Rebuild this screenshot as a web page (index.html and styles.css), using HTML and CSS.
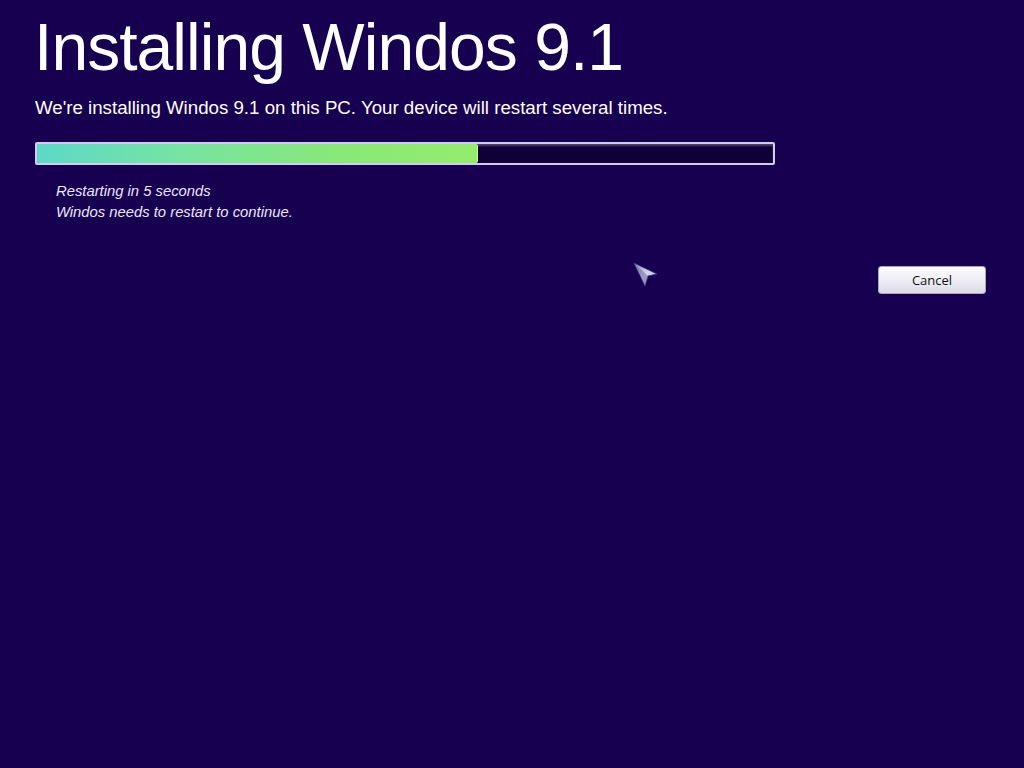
FILE: index.html
```html
<!DOCTYPE html>
<html lang="en">
<head>
    <meta charset="UTF-8">
    <title>Installing Windos 9.1</title>
    <link rel="stylesheet" href="styles.css">
</head>
<body>
    <div class="setup">
        <h1 class="title">Installing Windos 9.1</h1>
        <p class="subtitle">We're installing Windos 9.1 on this PC. Your device will restart several times.</p>

        <div class="progress">
            <div class="progress-fill" style="width: 59.9%"></div>
        </div>

        <div class="status">
            <p>Restarting in 5 seconds</p>
            <p>Windos needs to restart to continue.</p>
        </div>

        <div class="actions">
            <button class="btn">Cancel</button>
        </div>
    </div>

    <!-- mouse pointer -->
    <svg class="pointer" width="28" height="28" viewBox="0 0 28 28">
        <defs>
            <linearGradient id="ptr" x1="0" y1="0" x2="1" y2="1">
                <stop offset="0" stop-color="#8a86b8"/>
                <stop offset="0.5" stop-color="#d8d6ea"/>
                <stop offset="1" stop-color="#9a96c0"/>
            </linearGradient>
        </defs>
        <path d="M2 2 L25 13 L16 15 L13 25 Z" fill="url(#ptr)" stroke="#3a2c7a" stroke-width="0.8"/>
        <path d="M2 2 L16 15 L13 25 Z" fill="#6f6aa0" opacity="0.55"/>
    </svg>
</body>
</html>
```

FILE: styles.css
```css
* {
    margin: 0;
    padding: 0;
    box-sizing: border-box;
}

html, body {
    height: 100%;
}

body {
    background-color: #170050;
    color: #fff;
    font-family: "Liberation Sans", Arial, sans-serif;
    overflow: hidden;
    position: relative;
}

.setup {
    padding: 12px 38px 0 35px;
}

.title {
    font-size: 66px;
    font-weight: normal;
    line-height: 70px;
    letter-spacing: -0.95px;
    margin-left: -1px;
}

.subtitle {
    font-size: 18.7px;
    line-height: 22px;
    margin-top: 15px;
}

.progress {
    width: 740px;
    height: 23px;
    margin-top: 23px;
    border: 2px solid #d4ccef;
    border-radius: 2px;
    background: #0f0038;
    box-shadow: inset 0 2px 2px rgba(255, 255, 255, 0.25);
    overflow: hidden;
}

.progress-fill {
    height: 100%;
    background: linear-gradient(90deg, #5ed8c8 0%, #78e4a0 35%, #8ae878 70%, #94ec6c 100%);
    border-right: 1px solid #c6f5b0;
    border-radius: 0 2px 2px 0;
}

.status {
    margin-top: 16px;
    padding-left: 21px;
    font-size: 14.8px;
    line-height: 21px;
    font-style: italic;
    color: #ece6ff;
}

.actions {
    display: flex;
    justify-content: flex-end;
    margin-top: 43px;
}

.btn {
    width: 108px;
    height: 28px;
    font-family: "Open Sans", "Noto Sans", sans-serif;
    font-size: 13px;
    color: #111;
    border: 1px solid #a9a6bb;
    border-radius: 3px;
    background: linear-gradient(#fbfbfd 0%, #eeeef4 50%, #dcdbe6 100%);
    cursor: default;
}

.pointer {
    position: absolute;
    left: 632px;
    top: 261px;
}
```
